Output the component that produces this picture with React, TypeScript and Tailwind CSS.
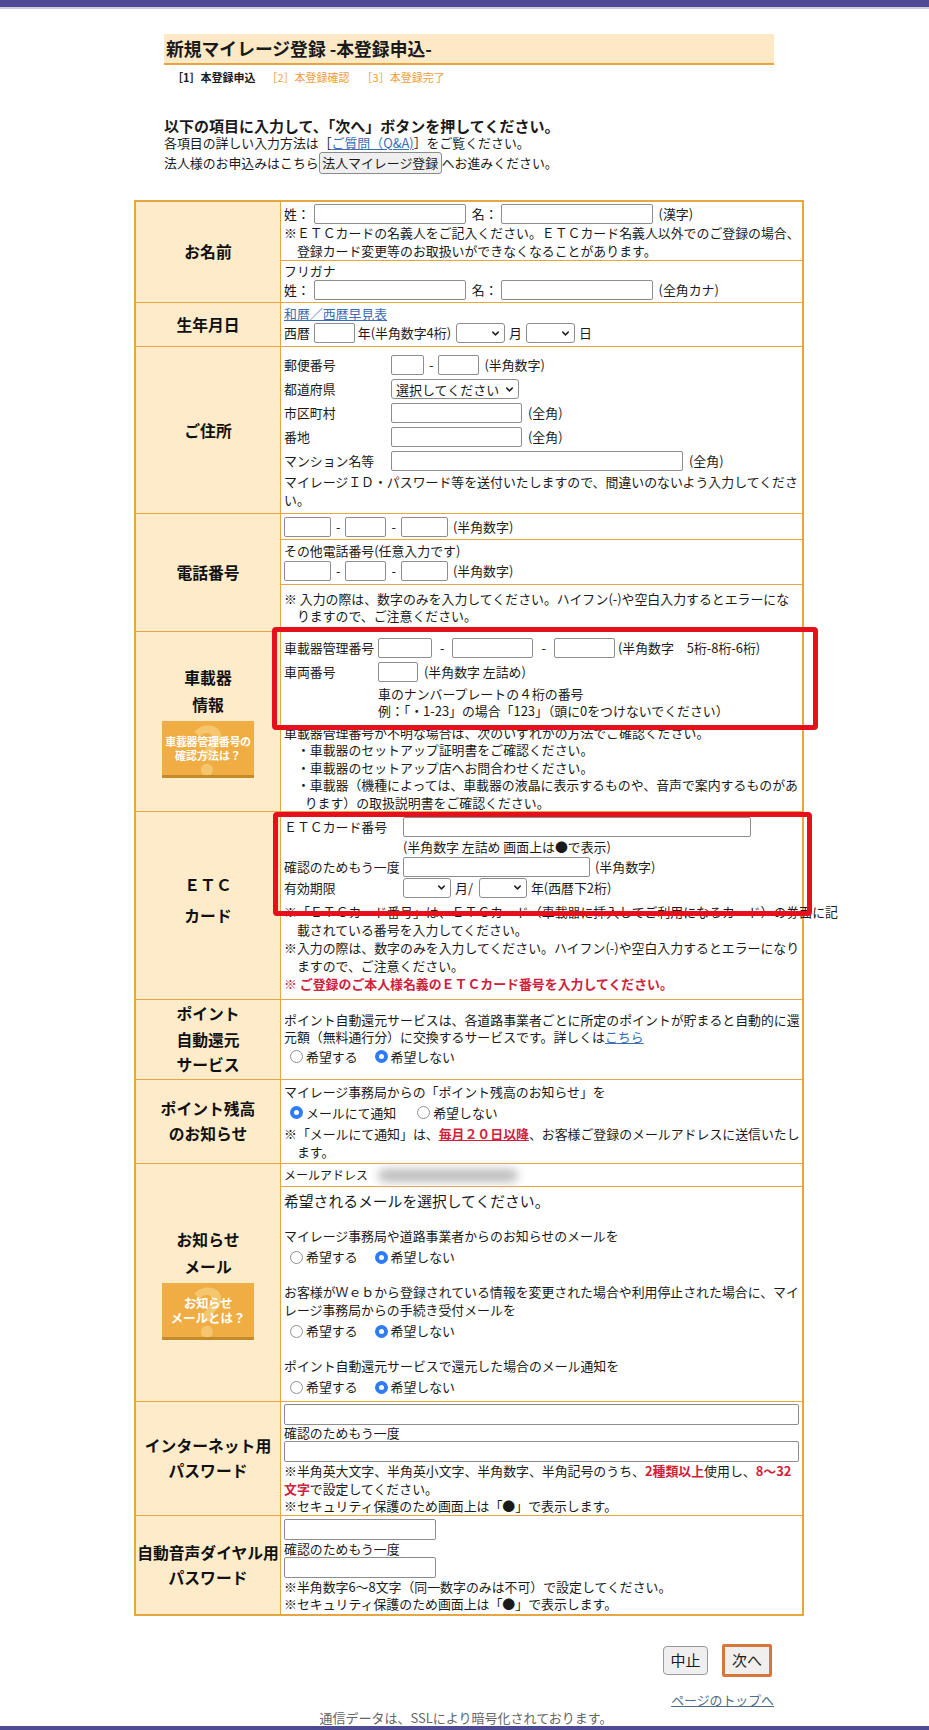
import React from "react";
import { ChevronDown } from "lucide-react";

const In = ({ c }: { c: string }) => (
  <span className={`inline-block h-[20px] border border-[#8d8d8d] rounded-[2px] bg-white shrink-0 ${c}`} />
);

const InB = ({ c }: { c: string }) => (
  <div className={`h-[21px] border border-[#8d8d8d] rounded-[2px] bg-white ${c}`} />
);

const Sel = ({ c, t }: { c: string; t?: string }) => (
  <span
    className={`inline-flex items-center justify-between h-[20px] border border-[#8d8d8d] rounded-[3px] bg-white pl-[4px] pr-[3px] shrink-0 whitespace-nowrap overflow-hidden ${c}`}
  >
    <span className="text-[13px] leading-none">{t}</span>
    <ChevronDown size={11} strokeWidth={3.2} className="text-[#222] shrink-0" />
  </span>
);

const Rd = ({ on, t, c = "" }: { on?: boolean; t: string; c?: string }) => (
  <span className={`inline-flex items-center ${c}`}>
    {on ? (
      <span className="w-[13px] h-[13px] rounded-full bg-[#2f7bf5] flex items-center justify-center">
        <span className="w-[5px] h-[5px] rounded-full bg-white" />
      </span>
    ) : (
      <span className="w-[13px] h-[13px] rounded-full border border-[#909090] bg-white" />
    )}
    <span className="ml-[3px]">{t}</span>
  </span>
);

const Hint = ({ l1, l2, small }: { l1: string; l2: string; small?: boolean }) => (
  <div className="relative mt-[3px] w-[92px] h-[57px] bg-[#efad43] border-b-[3px] border-[#c48a2c] overflow-hidden flex flex-col items-center justify-center">
    <span className="absolute top-[-6px] text-[64px] font-bold text-[#f6c66e] leading-none">?</span>
    <span
      className={`relative text-white font-bold ${small ? "text-[11px] leading-[14px]" : "text-[12.5px] leading-[15px]"} tracking-[-0.3px]`}
    >
      {l1}
    </span>
    <span
      className={`relative text-white font-bold ${small ? "text-[11px] leading-[14px]" : "text-[12.5px] leading-[15px]"}`}
    >
      {l2}
    </span>
  </div>
);

const LBL =
  "w-[145px] shrink-0 bg-[#fdebca] border-r border-[#e8a643] flex flex-col items-center justify-center text-center font-bold text-[15.8px] leading-[25px] text-[#111]";

function Row({
  label,
  children,
  last,
}: {
  label: React.ReactNode;
  children: React.ReactNode;
  last?: boolean;
}) {
  return (
    <div className={last ? "flex" : "flex border-b border-[#e8a643]"}>
      <div className={LBL}>{label}</div>
      <div className="flex-1 min-w-0 relative flex flex-col justify-center bg-white">{children}</div>
    </div>
  );
}

const Field = ({ l, w, children }: { l: string; w: string; children?: React.ReactNode }) => (
  <div className="h-[24px] flex items-center">
    <span className={`shrink-0 ${w}`}>{l}</span>
    {children}
  </div>
);

const Dash = () => <span className="mx-[5px]">-</span>;

const RR = ({ h, a, b, firstOn, gap }: { h: string; a: string; b: string; firstOn?: boolean; gap: string }) => (
  <div className={`flex items-center pl-[6px] ${h}`}>
    <Rd on={firstOn} t={a} />
    <Rd on={!firstOn} t={b} c={gap} />
  </div>
);

export default function App() {
  return (
    <div className="min-h-[1730px] flex flex-col bg-white text-[#1a1a1a] font-['Noto_Sans_CJK_JP','Noto_Sans',sans-serif]">
      <div className="h-[7px] bg-[#4f4a94]" />
      <div className="h-[2px] bg-[#d0d0da]" />
      <div className="pl-[9px]">
        <div className="mx-auto w-[610px]">
          {/* Title */}
          <div className="mt-[25px] h-[31px] bg-[#fde9c6] border-b-2 border-[#e9a53c] flex items-center px-[2px] text-[17.8px] font-bold">
            新規マイレージ登録 -本登録申込-
          </div>
          <div className="mt-[4px] pl-[8px] text-[11px] leading-[16px] flex">
            <span className="font-bold">［1］本登録申込</span>
            <span className="ml-[11px] text-[#ef9f3a]">［2］本登録確認</span>
            <span className="ml-[12px] text-[#ef9f3a]">［3］本登録完了</span>
          </div>

          {/* Intro */}
          <div className="mt-[32px] text-[15px] leading-[18px] font-bold">
            以下の項目に入力して、「次へ」ボタンを押してください。
          </div>
          <div className="text-[12.9px] leading-[16px]">
            各項目の詳しい入力方法は［<span className="text-[#3d6db5] underline">ご質問（Q&amp;A)</span>］をご覧ください。
          </div>
          <div className="mt-[1px] h-[22px] flex items-center text-[12.9px]">
            <span>法人様のお申込みはこちら</span>
            <span className="h-[22px] w-[123px] flex items-center justify-center border border-[#8a8a8a] rounded-[3px] bg-[#efefef] text-[12.9px]">
              法人マイレージ登録
            </span>
            <span>へお進みください。</span>
          </div>

          {/* Table */}
          <div className="mt-[26px] -mx-[30px] border-2 border-[#e8a643] text-[12.9px] leading-[17.5px]">
            {/* お名前 */}
            <Row label={<span>お名前</span>}>
              <div className="px-[3px] py-[1px] border-b border-[#e8a643]">
                <div className="h-[21px] flex items-center">
                  <span>姓：</span>
                  <In c="w-[152px] ml-[4px]" />
                  <span className="ml-[6px]">名：</span>
                  <In c="w-[152px] ml-[3px]" />
                  <span className="ml-[6px]">(漢字)</span>
                </div>
                <div className="whitespace-nowrap">※ＥＴＣカードの名義人をご記入ください。ＥＴＣカード名義人以外でのご登録の場合、</div>
                <div className="pl-[1em] whitespace-nowrap">登録カード変更等のお取扱いができなくなることがあります。</div>
              </div>
              <div className="px-[3px] pt-[1px] pb-[1px]">
                <div>フリガナ</div>
                <div className="h-[21px] flex items-center">
                  <span>姓：</span>
                  <In c="w-[152px] ml-[4px]" />
                  <span className="ml-[6px]">名：</span>
                  <In c="w-[152px] ml-[3px]" />
                  <span className="ml-[6px]">(全角カナ)</span>
                </div>
              </div>
            </Row>

            {/* 生年月日 */}
            <Row label={<span>生年月日</span>}>
              <div className="px-[3px] py-[2px]">
                <div>
                  <span className="text-[#3d6db5] underline">和暦／西暦早見表</span>
                </div>
                <div className="h-[22px] flex items-center">
                  <span>西暦</span>
                  <In c="w-[41px] ml-[4px]" />
                  <span className="ml-[3px]">年(半角数字4桁)</span>
                  <Sel c="w-[49px] ml-[5px]" />
                  <span className="ml-[4px]">月</span>
                  <Sel c="w-[49px] ml-[4px]" />
                  <span className="ml-[4px]">日</span>
                </div>
              </div>
            </Row>

            {/* ご住所 */}
            <Row label={<span>ご住所</span>}>
              <div className="px-[3px] pt-[6px] pb-[5px]">
                <Field l="郵便番号" w="w-[107px]">
                  <In c="w-[33px]" />
                  <Dash />
                  <In c="w-[41px]" />
                  <span className="ml-[5px]">(半角数字)</span>
                </Field>
                <Field l="都道府県" w="w-[107px]">
                  <Sel c="w-[128px]" t="選択してください" />
                </Field>
                <Field l="市区町村" w="w-[107px]">
                  <In c="w-[131px]" />
                  <span className="ml-[6px]">(全角)</span>
                </Field>
                <Field l="番地" w="w-[107px]">
                  <In c="w-[131px]" />
                  <span className="ml-[6px]">(全角)</span>
                </Field>
                <Field l="マンション名等" w="w-[107px]">
                  <In c="w-[292px]" />
                  <span className="ml-[6px]">(全角)</span>
                </Field>
                <div className="whitespace-nowrap">マイレージＩＤ・パスワード等を送付いたしますので、間違いのないよう入力してくださ</div>
                <div>い。</div>
              </div>
            </Row>

            {/* 電話番号 */}
            <Row label={<span>電話番号</span>}>
              <div className="px-[3px] py-[2px] border-b border-[#e8a643]">
                <div className="h-[21px] flex items-center">
                  <In c="w-[47px]" />
                  <Dash />
                  <In c="w-[41px]" />
                  <Dash />
                  <In c="w-[47px]" />
                  <span className="ml-[5px]">(半角数字)</span>
                </div>
              </div>
              <div className="px-[3px] py-[2px] border-b border-[#e8a643]">
                <div>その他電話番号(任意入力です)</div>
                <div className="h-[22px] flex items-center">
                  <In c="w-[47px]" />
                  <Dash />
                  <In c="w-[41px]" />
                  <Dash />
                  <In c="w-[47px]" />
                  <span className="ml-[5px]">(半角数字)</span>
                </div>
              </div>
              <div className="px-[3px] pt-[5px] pb-[6px]">
                <div className="whitespace-nowrap">※ 入力の際は、数字のみを入力してください。ハイフン(-)や空白入力するとエラーにな</div>
                <div className="pl-[1em] whitespace-nowrap">りますので、ご注意ください。</div>
              </div>
            </Row>

            {/* 車載器情報 */}
            <Row
              label={
                <>
                  <span className="leading-[27px]">車載器</span>
                  <span className="leading-[27px]">情報</span>
                  <Hint l1="車載器管理番号の" l2="確認方法は？" small />
                </>
              }
            >
              <div className="px-[3px] pt-[4px] pb-0">
                <div className="h-[24px] flex items-center">
                  <span className="w-[94px] shrink-0 whitespace-nowrap">車載器管理番号</span>
                  <In c="w-[54px]" />
                  <span className="mx-[8px]">-</span>
                  <In c="w-[81px]" />
                  <span className="mx-[8px]">-</span>
                  <In c="w-[61px]" />
                  <span className="ml-[3px]">(半角数字　5桁-8桁-6桁)</span>
                </div>
                <div className="h-[25px] flex items-center">
                  <span className="w-[94px] shrink-0">車両番号</span>
                  <In c="w-[40px]" />
                  <span className="ml-[6px]">(半角数字 左詰め)</span>
                </div>
                <div className="pl-[94px]">車のナンバープレートの４桁の番号</div>
                <div className="pl-[94px]">例：「・1-23」の場合「123」（頭に0をつけないでください）</div>
                <div className="mt-[4px] whitespace-nowrap">車載器管理番号が不明な場合は、次のいずれかの方法でご確認ください。</div>
                <div className="pl-[1em]">・車載器のセットアップ証明書をご確認ください。</div>
                <div className="pl-[1em]">・車載器のセットアップ店へお問合わせください。</div>
                <div className="pl-[1em] whitespace-nowrap">・車載器（機種によっては、車載器の液晶に表示するものや、音声で案内するものがあ</div>
                <div className="pl-[1.6em] whitespace-nowrap">ります）の取扱説明書をご確認ください。</div>
              </div>
              <div className="absolute left-[-9px] top-[-5px] w-[546px] h-[103px] border-[5px] border-[#e5101c] rounded-[4px] z-10 pointer-events-none" />
            </Row>

            {/* ETCカード */}
            <Row
              label={
                <div className="flex flex-col items-center mb-[12px]">
                  <span className="leading-[31px]">ＥＴＣ</span>
                  <span className="leading-[31px]">カード</span>
                </div>
              }
            >
              <div className="px-[3px] pt-[4px] pb-[6px]">
                <div className="h-[22px] flex items-center">
                  <span className="w-[119px] shrink-0 whitespace-nowrap">ＥＴＣカード番号</span>
                  <In c="w-[348px]" />
                </div>
                <div className="pl-[119px] leading-[18px]">(半角数字 左詰め 画面上は●で表示)</div>
                <div className="h-[21px] flex items-center">
                  <span className="w-[119px] shrink-0 whitespace-nowrap">確認のためもう一度</span>
                  <In c="w-[187px]" />
                  <span className="ml-[5px]">(半角数字)</span>
                </div>
                <div className="h-[21px] flex items-center">
                  <span className="w-[119px] shrink-0">有効期限</span>
                  <Sel c="w-[48px]" />
                  <span className="ml-[4px]">月/</span>
                  <Sel c="w-[48px] ml-[6px]" />
                  <span className="ml-[4px]">年(西暦下2桁)</span>
                </div>
                <div className="mt-[5px] leading-[18px]">
                  <div className="whitespace-nowrap">※「ＥＴＣカード番号」は、ＥＴＣカード（車載器に挿入してご利用になるカード）の券面に記</div>
                  <div className="pl-[1em] whitespace-nowrap">載されている番号を入力してください。</div>
                  <div className="whitespace-nowrap">※入力の際は、数字のみを入力してください。ハイフン(-)や空白入力するとエラーになり</div>
                  <div className="pl-[1em] whitespace-nowrap">ますので、ご注意ください。</div>
                  <div className="text-[#d0213a] font-bold">※ ご登録のご本人様名義のＥＴＣカード番号を入力してください。</div>
                </div>
              </div>
              <div className="absolute left-[-8px] top-0 w-[539px] h-[104px] border-[5px] border-[#e5101c] rounded-[4px] z-10 pointer-events-none" />
            </Row>

            {/* ポイント自動還元サービス */}
            <Row
              label={
                <div className="flex flex-col items-center py-[1px] leading-[25.5px]">
                  <span>ポイント</span>
                  <span>自動還元</span>
                  <span>サービス</span>
                </div>
              }
            >
              <div className="px-[3px]">
                <div className="whitespace-nowrap">ポイント自動還元サービスは、各道路事業者ごとに所定のポイントが貯まると自動的に還</div>
                <div className="whitespace-nowrap">
                  元額（無料通行分）に交換するサービスです。詳しくは<span className="text-[#3d6db5] underline">こちら</span>
                </div>
                <RR h="h-[22px]" a="希望する" b="希望しない" gap="ml-[17px]" />
              </div>
            </Row>

            {/* ポイント残高のお知らせ */}
            <Row
              label={
                <>
                  <span>ポイント残高</span>
                  <span>のお知らせ</span>
                </>
              }
            >
              <div className="px-[3px] pt-[3px] pb-[3px]">
                <div>マイレージ事務局からの「ポイント残高のお知らせ」を</div>
                <RR h="h-[25px]" a="メールにて通知" b="希望しない" firstOn gap="ml-[21px]" />
                <div className="whitespace-nowrap">
                  ※「メールにて通知」は、
                  <span className="text-[#d0213a] font-bold underline">毎月２０日以降</span>
                  、お客様ご登録のメールアドレスに送信いたし
                </div>
                <div className="pl-[1em]">ます。</div>
              </div>
            </Row>

            {/* お知らせメール */}
            <Row
              label={
                <>
                  <span className="leading-[27px]">お知らせ</span>
                  <span className="leading-[27px]">メール</span>
                  <Hint l1="お知らせ" l2="メールとは？" />
                </>
              }
            >
              <div className="px-[3px] h-[23px] flex items-center border-b border-[#e8a643]">
                <span className="text-[12px]">メールアドレス</span>
                <span className="inline-block ml-[10px] w-[140px] h-[13px] rounded-full bg-[#bcbcbc] blur-[5px]" />
              </div>
              <div className="px-[3px] pt-[4px] pb-[2px] leading-[18px]">
                <div className="text-[14.8px] leading-[20px]">希望されるメールを選択してください。</div>
                <div className="mt-[16px]">マイレージ事務局や道路事業者からのお知らせのメールを</div>
                <RR h="h-[24px]" a="希望する" b="希望しない" gap="ml-[17px]" />
                <div className="mt-[14px] whitespace-nowrap">お客様がＷｅｂから登録されている情報を変更された場合や利用停止された場合に、マイ</div>
                <div>レージ事務局からの手続き受付メールを</div>
                <RR h="h-[24px]" a="希望する" b="希望しない" gap="ml-[17px]" />
                <div className="mt-[14px]">ポイント自動還元サービスで還元した場合のメール通知を</div>
                <RR h="h-[24px]" a="希望する" b="希望しない" gap="ml-[17px]" />
              </div>
            </Row>

            {/* インターネット用パスワード */}
            <Row
              label={
                <>
                  <span>インターネット用</span>
                  <span>パスワード</span>
                </>
              }
            >
              <div className="px-[3px] pt-[2px]">
                <InB c="w-full" />
                <div className="leading-[16px]">確認のためもう一度</div>
                <InB c="w-full" />
                <div className="whitespace-nowrap">
                  ※半角英大文字、半角英小文字、半角数字、半角記号のうち、
                  <span className="text-[#d0213a] font-bold">2種類以上</span>使用し、
                  <span className="text-[#d0213a] font-bold">8〜32</span>
                </div>
                <div>
                  <span className="text-[#d0213a] font-bold">文字</span>で設定してください。
                </div>
                <div>※セキュリティ保護のため画面上は「●」で表示します。</div>
              </div>
            </Row>

            {/* 自動音声ダイヤル用パスワード */}
            <Row
              last
              label={
                <>
                  <span className="whitespace-nowrap">自動音声ダイヤル用</span>
                  <span>パスワード</span>
                </>
              }
            >
              <div className="px-[3px] pt-[3px] pb-[1px]">
                <InB c="w-[152px]" />
                <div className="leading-[17px]">確認のためもう一度</div>
                <InB c="w-[152px]" />
                <div>※半角数字6〜8文字（同一数字のみは不可）で設定してください。</div>
                <div>※セキュリティ保護のため画面上は「●」で表示します。</div>
              </div>
            </Row>
          </div>

          {/* Buttons */}
          <div className="mt-[28px] flex justify-end items-center pr-[2px]">
            <span className="h-[29px] w-[45px] flex items-center justify-center border border-[#9a9a9a] rounded-[4px] bg-[#efefef] text-[15px]">
              中止
            </span>
            <span className="ml-[14px] h-[33px] w-[50px] flex items-center justify-center border-[3px] border-[#d9773b] rounded-[2px] bg-[#f1efee] text-[15px]">
              次へ
            </span>
          </div>
          <div className="mt-[14px] flex justify-end leading-[18px] text-[12.9px]">
            <span className="text-[#4d6c8b] underline">ページのトップへ</span>
          </div>
        </div>
      </div>
      <div className="mt-[1px] text-center text-[13px] leading-[16px] text-[#666] pl-[3px]">
        通信データは、SSLにより暗号化されております。
      </div>
      <div className="mt-auto h-[4px] bg-[#4f4a94]" />
    </div>
  );
}
